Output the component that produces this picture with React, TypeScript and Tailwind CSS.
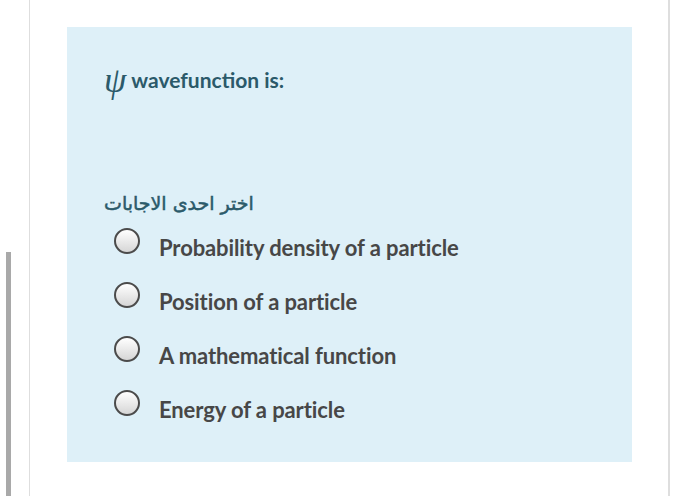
import React from "react";

const options = [
  "Probability density of a particle",
  "Position of a particle",
  "A mathematical function",
  "Energy of a particle",
];

function Radio() {
  return (
    <span className="block w-[26px] h-[26px] rounded-full border-2 border-[#4b4b4b] bg-gradient-to-b from-[#ffffff] to-[#d6d6d6] shrink-0" />
  );
}

export default function App() {
  return (
    <div className="w-[700px] h-[496px] bg-white flex overflow-hidden" style={{ fontFamily: "Lato, 'Noto Sans', sans-serif" }}>
      <div className="w-[29px] shrink-0 flex flex-col">
        <div className="h-[252px]" />
        <div className="ml-[6px] w-[5px] flex-1 bg-[#a9a9a9]" />
      </div>
      <div className="w-[641px] shrink-0 border-l-[1.5px] border-r-2 border-[#dedede] pt-[27px] pl-[37px]">
        <div className="w-[565px] h-[435px] bg-[#def0f8] pl-[37px] pt-[36px]">
          <div className="flex items-center text-[#2b5a6a] text-[21px] font-bold h-[34px]">
            <span className="text-[36px] font-normal italic mr-[5px] leading-none" style={{ fontFamily: "'Liberation Serif', serif" }}>ψ</span>
            <span>wavefunction is:</span>
          </div>
          <div className="mt-[92px] flex">
            <div className="text-[#2b5a6a] text-[19px] font-normal leading-[28px] whitespace-nowrap [-webkit-text-stroke:0.5px_#2b5a6a]" dir="rtl" style={{ fontFamily: "'DejaVu Sans', sans-serif" }}>
              اختر احدى الاجابات
            </div>
          </div>
          <div className="flex flex-col gap-[28px] mt-[11px] pl-[10px]">
            {options.map((o) => (
              <div key={o} className="flex items-center h-[26px]">
                <Radio />
                <span className="ml-[19px] text-[22px] font-bold text-[#474747] tracking-[-0.1px] mt-[12px] whitespace-nowrap">{o}</span>
              </div>
            ))}
          </div>
        </div>
      </div>
    </div>
  );
}
